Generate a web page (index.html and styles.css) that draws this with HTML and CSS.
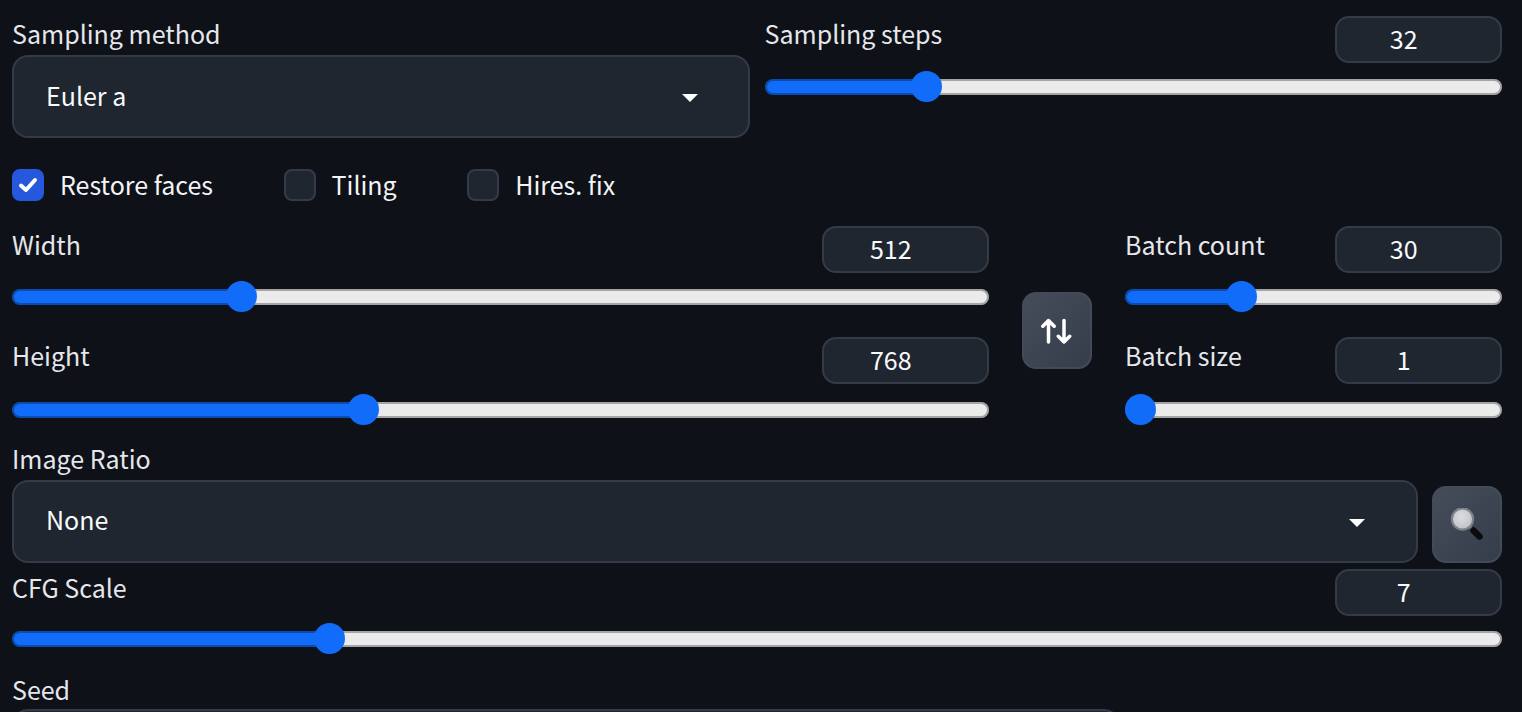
FILE: index.html
```html
<!DOCTYPE html>
<html lang="en">
<head>
  <meta charset="UTF-8"/>
  <meta name="viewport" content="width=device-width, initial-scale=1.0"/>
  <title>txt2img settings</title>
  <link rel="stylesheet" href="styles.css">
</head>
<body>
  <div class="panel">

    <!-- Sampler -->
    <div class="top-row">
      <div class="field">
        <div class="label sampler-label">Sampling method</div>
        <div class="dropdown"><span>Euler a</span><i class="caret"></i></div>
      </div>
      <div class="slider-block">
        <div class="slider-head">
          <span class="label">Sampling steps</span>
          <input class="num" type="number" value="32">
        </div>
        <input class="slider" type="range" min="1" max="150" value="32" style="--p: 0.208">
      </div>
    </div>

    <!-- Checkboxes -->
    <div class="checks">
      <label class="check"><span class="box on"><svg viewBox="0 0 32 32"><path d="M9 16.500l5 4.500 9-10"/></svg></span>Restore faces</label>
      <label class="check"><span class="box"></span>Tiling</label>
      <label class="check"><span class="box"></span>Hires. fix</label>
    </div>

    <!-- Size and batch -->
    <div class="size-row">
      <div class="size-col">
        <div class="slider-block">
          <div class="slider-head">
            <span class="label">Width</span>
            <input class="num" type="number" value="512">
          </div>
          <input class="slider" type="range" min="64" max="2048" value="512" style="--p: 0.2258">
        </div>
        <div class="slider-block">
          <div class="slider-head">
            <span class="label">Height</span>
            <input class="num" type="number" value="768">
          </div>
          <input class="slider" type="range" min="64" max="2048" value="768" style="--p: 0.3548">
        </div>
      </div>
      <button class="tool-btn swap-btn">
        <svg viewBox="0 0 32 26" width="32" height="26"><path d="M7.500 24V2.500M1.800 8.200L7.500 2.500l5.700 5.700M23 2.500V24M17.300 18.300L23 24l5.700-5.700"/></svg>
      </button>
      <div class="batch-col">
        <div class="slider-block">
          <div class="slider-head">
            <span class="label">Batch count</span>
            <input class="num" type="number" value="30">
          </div>
          <input class="slider" type="range" min="1" max="100" value="30" style="--p: 0.2929">
        </div>
        <div class="slider-block">
          <div class="slider-head">
            <span class="label">Batch size</span>
            <input class="num" type="number" value="1">
          </div>
          <input class="slider" type="range" min="1" max="100" value="1" style="--p: 0">
        </div>
      </div>
    </div>

    <!-- Image ratio -->
    <div class="label ratio-label">Image Ratio</div>
    <div class="ratio-row">
      <div class="dropdown"><span>None</span><i class="caret"></i></div>
      <button class="tool-btn search-btn">
        <svg viewBox="0 0 34 34" width="34" height="34">
          <defs>
            <radialGradient id="lens" cx="45%" cy="40%" r="65%">
              <stop offset="0" stop-color="#dcdde0"/>
              <stop offset="1" stop-color="#bcbfc5"/>
            </radialGradient>
          </defs>
          <path class="handle" d="M19 18l5 5"/>
          <path class="handle-cap" d="M23.500 22.500l6 6"/>
          <circle class="lens" cx="12.500" cy="11" r="10.600" fill="url(#lens)"/>
        </svg>
      </button>
    </div>

    <!-- CFG -->
    <div class="slider-block cfg">
      <div class="slider-head">
        <span class="label">CFG Scale</span>
        <input class="num" type="number" value="7">
      </div>
      <input class="slider" type="range" min="1" max="30" value="7" style="--p: 0.2069">
    </div>

    <!-- Seed -->
    <div class="label seed-label">Seed</div>
    <div class="seed-input"></div>
  </div>
</body>
</html>
```

FILE: styles.css
```css
html, body {
  margin: 0;
  height: 100%;
  overflow: hidden;
  background-color: #0e1118;
}

body {
  font-family: "Noto Sans CJK JP", "Noto Sans", sans-serif;
  font-size: 25px;
  color: #f3f4f6;
}

.panel {
  padding: 16px 20px 0 12px;
}

.label {
  color: #e5e7eb;
  line-height: 34px;
  height: 38px;
}

.top-row {
  display: grid;
  grid-template-columns: 1fr 1fr;
  gap: 15px;
}

.sampler-label {
  margin-bottom: 1px;
}

.dropdown {
  display: flex;
  align-items: center;
  justify-content: space-between;
  box-sizing: border-box;
  height: 83px;
  padding: 0 50px 0 32px;
  background-color: #1f2630;
  border: 2px solid #343b47;
  border-radius: 16px;
  color: #f9fafb;
}

.dropdown span {
  margin-top: -4px;
}

.caret {
  width: 0;
  height: 0;
  margin-top: 2px;
  border-left: 8px solid transparent;
  border-right: 8px solid transparent;
  border-top: 8px solid #fff;
}

.slider-head {
  display: flex;
  justify-content: space-between;
  align-items: flex-start;
  height: 47px;
}

.num {
  box-sizing: border-box;
  width: 167.500px;
  height: 47px;
  padding: 0 14px 3px 0;
  background-color: #1f2630;
  border: 2px solid #343b47;
  border-radius: 14px;
  font: inherit;
  color: #f9fafb;
  text-align: center;
  appearance: textfield;
}

.slider {
  display: block;
  width: 100%;
  height: 31px;
  margin: 8px 0 0;
  background: transparent;
  appearance: none;
  -webkit-appearance: none;
}

.slider-block + .slider-block .slider {
  margin-top: 10px;
}

.slider::-webkit-slider-runnable-track {
  height: 16px;
  border-radius: 8px;
  box-shadow: inset 0 0 0 2px rgba(0, 0, 0, 0.3);
  background: linear-gradient(to right,
    #116df9 calc(15px + var(--p) * (100% - 30px)),
    #ebebeb calc(15px + var(--p) * (100% - 30px)));
}

.slider::-webkit-slider-thumb {
  -webkit-appearance: none;
  box-sizing: border-box;
  width: 31px;
  height: 31px;
  margin-top: -7.500px;
  border: none;
  border-radius: 50%;
  background-color: #116df9;
}

.checks {
  display: flex;
  gap: 70.500px;
  margin-top: 31px;
  height: 32px;
  align-items: flex-start;
}

.check {
  display: flex;
  align-items: flex-start;
  gap: 16px;
  color: #f3f4f6;
  line-height: 30px;
}

.box {
  box-sizing: border-box;
  display: block;
  width: 32px;
  height: 32px;
  background-color: #1f2630;
  border: 2px solid #343b47;
  border-radius: 8px;
}

.box.on {
  background-color: #2558dc;
  border-color: #2558dc;
}

.box svg {
  display: block;
  width: 32px;
  height: 32px;
  margin: -2px;
  fill: none;
  stroke: #fff;
  stroke-width: 4;
  stroke-linecap: round;
  stroke-linejoin: round;
}

.size-row {
  display: flex;
  align-items: flex-start;
  gap: 33px;
  margin-top: 25px;
}

.size-row .label {
  line-height: 36px;
}

.size-col {
  flex: 1;
  display: flex;
  flex-direction: column;
  gap: 25px;
}

.batch-col {
  width: 377px;
  display: flex;
  flex-direction: column;
  gap: 25px;
}

.tool-btn {
  display: flex;
  align-items: center;
  justify-content: center;
  box-sizing: border-box;
  padding: 0;
  width: 70px;
  height: 77px;
  background: linear-gradient(to bottom right, #454d5a, #363d4a);
  border: 2px solid #444b58;
  border-radius: 14px;
}

.swap-btn {
  margin-top: 66px;
}

.swap-btn svg {
  fill: none;
  stroke: #fff;
  stroke-width: 3.500;
  stroke-linecap: round;
  stroke-linejoin: round;
}

.ratio-label {
  margin-top: 13px;
  height: 44px;
  line-height: 40px;
}

.ratio-row {
  display: flex;
  align-items: flex-end;
  gap: 14px;
  margin-top: -2px;
}

.ratio-row .dropdown {
  flex: 1;
  padding-right: 51px;
}

.ratio-row .dropdown span {
  margin-top: -6px;
}

.search-btn {
  flex: none;
}

.lens {
  stroke: #7d8188;
  stroke-width: 2.200;
}

.handle {
  fill: none;
  stroke: #6a6d73;
  stroke-width: 3;
}

.handle-cap {
  fill: none;
  stroke: #0b0b0d;
  stroke-width: 6.500;
  stroke-linecap: round;
}

.cfg {
  margin-top: 6px;
}

.cfg .label {
  line-height: 36px;
}

.cfg .slider {
  margin-top: 7px;
}

.seed-label {
  margin-top: 18px;
  height: 37px;
}

.seed-input {
  box-sizing: border-box;
  width: 1108px;
  height: 60px;
  background-color: #1f2630;
  border: 2px solid #343b47;
  border-radius: 16px;
}
```
